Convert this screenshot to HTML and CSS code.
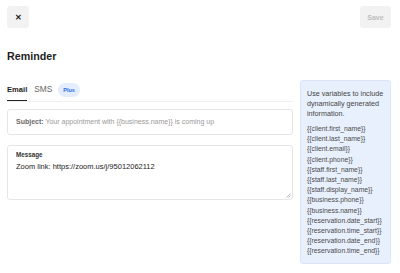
FILE: index.html
```html
<!DOCTYPE html>
<html lang="en">
    <head>
        <meta charset="UTF-8">
        <meta name="viewport" content="width=device-width, initial-scale=1.0">
        <title>Reminder</title>
        <link rel="stylesheet" href="styles.css">
    </head>
    <body>
        <div class="pagina">
            <div class="topo">
                <button class="botao fechar">&#x2715;</button>
                <button class="botao salvar" disabled>Save</button>
            </div>

            <h1 class="titulo">Reminder</h1>

            <div class="conteudo">
                <div class="principal">
                    <div class="abas">
                        <span class="aba ativa">Email</span>
                        <span class="aba">SMS</span>
                        <span class="selo">Plus</span>
                    </div>

                    <div class="campo assunto">
                        <b>Subject:</b> Your appointment with {{business.name}} is coming up
                    </div>

                    <div class="campo mensagem">
                        <div class="rotulo">Message</div>
                        <div class="texto">Zoom link: https://zoom.us/j/95012062112</div>
                        <svg class="alca" width="5" height="5" viewBox="0 0 5 5">
                            <path d="M0.5 4.5 L4.5 0.5 M2.5 4.5 L4.5 2.5" stroke="#aaa" stroke-width="0.8"/>
                        </svg>
                    </div>
                </div>

                <div class="painel">
                    <p>Use variables to include dynamically generated information.</p>
                    <ul class="variaveis">
                        <li>{{client.first_name}}</li>
                        <li>{{client.last_name}}</li>
                        <li>{{client.email}}</li>
                        <li>{{client.phone}}</li>
                        <li>{{staff.first_name}}</li>
                        <li>{{staff.last_name}}</li>
                        <li>{{staff.display_name}}</li>
                        <li>{{business.phone}}</li>
                        <li>{{business.name}}</li>
                        <li>{{reservation.date_start}}</li>
                        <li>{{reservation.time_start}}</li>
                        <li>{{reservation.date_end}}</li>
                        <li>{{reservation.time_end}}</li>
                    </ul>
                </div>
            </div>
        </div>
    </body>
</html>
```

FILE: styles.css
```css
html, body {
    height: 100%;
}

body {
    margin: 0;
    padding: 0;
    background: #fff;
    color: #222;
    font-family: 'Liberation Sans', Arial, sans-serif;
}

.pagina {
    padding: 6px 9px 0 7px;
}

.topo {
    display: flex;
    justify-content: space-between;
}

.botao {
    height: 22px;
    border: none;
    border-radius: 3px;
    background: #f2f2f2;
    font-family: inherit;
    padding: 0;
}

.fechar {
    width: 22px;
    font-size: 8px;
    font-weight: bold;
    color: #222;
}

.salvar {
    width: 31px;
    font-size: 7px;
    font-weight: bold;
    color: #bdbdbd;
}

.titulo {
    margin: 21px 0 0;
    font-size: 10.7px;
    line-height: 14px;
    font-weight: bold;
    color: #1e1e1e;
}

.conteudo {
    display: flex;
    gap: 7px;
    margin-top: 17px;
}

.principal {
    width: 286px;
}

.abas {
    display: flex;
    align-items: center;
    height: 21px;
    border-bottom: 1px solid #f0f0f0;
    font-size: 8.3px;
}

.aba {
    height: 21px;
    line-height: 19px;
    box-sizing: border-box;
    color: #666;
    margin-right: 6px;
}

.aba.ativa {
    font-size: 7.6px;
    color: #1e1e1e;
    font-weight: bold;
    border-bottom: 1.5px solid #222;
    margin-right: 7px;
}

.selo {
    background: #e3edfd;
    color: #2f6ae0;
    font-size: 5.5px;
    font-weight: bold;
    border-radius: 7px;
    padding: 0 5px;
    line-height: 14px;
    margin-top: -2px;
}

.campo {
    box-sizing: border-box;
    border: 1px solid #e6e6e6;
    border-radius: 3px;
    padding: 0 8px;
    font-size: 7px;
}

.assunto {
    margin-top: 7px;
    height: 26px;
    line-height: 24px;
    color: #9a9a9a;
}

.assunto b {
    color: #6a6a6a;
}

.mensagem {
    position: relative;
    margin-top: 10px;
    height: 55px;
    padding-top: 4px;
}

.rotulo {
    font-size: 6.3px;
    font-weight: bold;
    color: #333;
    line-height: 9px;
}

.texto {
    margin-top: 2px;
    font-size: 7.5px;
    color: #222;
    line-height: 12px;
}

.alca {
    position: absolute;
    right: 1px;
    bottom: 1px;
}

.painel {
    box-sizing: border-box;
    width: 91px;
    height: 184px;
    background: #e9f0fd;
    border: 1px solid #dbe5f7;
    border-radius: 3px;
    padding: 8px 3px 0 6px;
    font-size: 7.2px;
    line-height: 10px;
    color: #444;
}

.painel p {
    margin: 0 0 5px;
}

.variaveis {
    list-style: none;
    margin: 0;
    padding: 0;
    font-size: 6.8px;
    line-height: 10.2px;
    color: #4a4a4a;
}
```
